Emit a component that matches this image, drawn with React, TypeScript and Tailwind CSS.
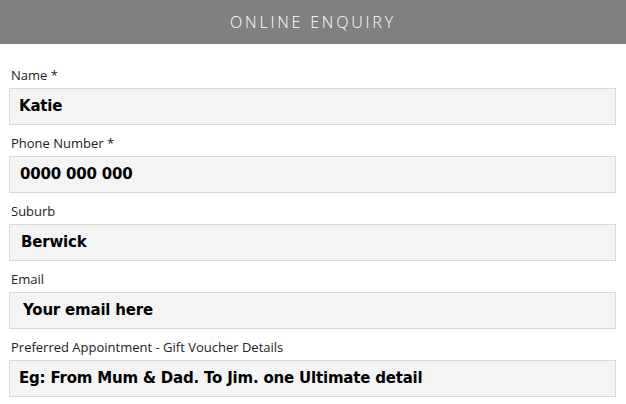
const fields = [
  { label: 'Name *', value: 'Katie', pad: 'pl-[9px]' },
  { label: 'Phone Number *', value: '0000 000 000', pad: 'pl-[10px]' },
  { label: 'Suburb', value: 'Berwick', pad: 'pl-[11px]' },
  { label: 'Email', value: 'Your email here', pad: 'pl-[13px]' },
  { label: 'Preferred Appointment - Gift Voucher Details', value: 'Eg: From Mum & Dad. To Jim. one Ultimate detail', pad: 'pl-[9px]' },
]

export default function App() {
  return (
    <div className="w-[626px] h-[404px] bg-white overflow-hidden">
      <div className="h-[44px] bg-[#808080] flex items-center justify-center">
        <h1 className="text-[16px] font-light tracking-[2.8px] text-white font-['Open_Sans',sans-serif]">
          ONLINE ENQUIRY
        </h1>
      </div>

      <div className="pt-[22px] pl-[9px] pr-[10px] flex flex-col gap-[9px]">
        {fields.map((f) => (
          <div key={f.label} className="flex flex-col gap-[4px]">
            <label className="pl-[2px] text-[13px] leading-[18px] text-[#222] font-['Open_Sans',sans-serif]">
              {f.label}
            </label>
            <div
              className={`h-[37px] bg-[#f4f4f4] border border-[#d9d9d9] flex items-center ${f.pad} text-[15px] tracking-[-0.2px] font-bold text-black font-['DejaVu_Sans',sans-serif]`}
            >
              {f.value}
            </div>
          </div>
        ))}
      </div>
    </div>
  )
}
